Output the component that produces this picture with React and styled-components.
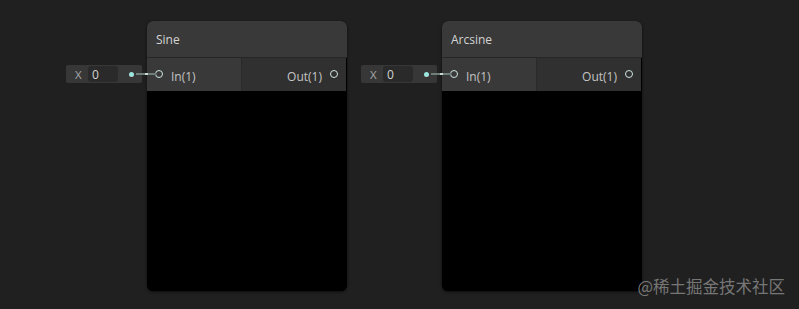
import styled, { createGlobalStyle } from "styled-components"

const GlobalStyle = createGlobalStyle`
  html, body {
    margin: 0;
    padding: 0;
    background: #202020;
  }
  body {
    font-family: "Open Sans", "DejaVu Sans", sans-serif;
  }
`

const Canvas = styled.div`
  position: relative;
  display: flex;
  align-items: flex-start;
  gap: 14px;
  width: 799px;
  height: 309px;
  padding: 21px 0 0 66px;
  box-sizing: border-box;
  background: #202020;
  overflow: hidden;
`

const Group = styled.div`
  display: flex;
  align-items: flex-start;
  gap: 5px;
`

const InlineField = styled.div`
  position: relative;
  display: flex;
  align-items: center;
  width: 76px;
  height: 18px;
  margin-top: 44px;
  padding-left: 9px;
  box-sizing: border-box;
  background: #373737;
  border-radius: 2px;
`

const FieldLabel = styled.span`
  width: 13px;
  font-size: 11.5px;
  color: #a8a8a8;
`

const FieldBox = styled.span`
  display: flex;
  align-items: center;
  width: 30px;
  height: 16px;
  padding-left: 4px;
  box-sizing: border-box;
  background: #2a2a2a;
  border-radius: 3px;
  font-size: 12px;
  color: #d2d2d2;
`

const Dot = styled.span`
  margin-left: 11px;
  width: 5px;
  height: 5px;
  border-radius: 50%;
  background: #9be6dc;
  box-shadow: 0 1px 0 #4a2a30;
`

const Wire = styled.span`
  position: absolute;
  left: 70px;
  top: 8px;
  width: 20px;
  height: 2px;
  background: linear-gradient(to right, #6f7d7b 0 9px, #c9d6d4 9px 12px, #6f7d7b 12px);
  z-index: 2;
`

const Node = styled.div`
  display: flex;
  flex-direction: column;
  width: 200px;
  height: 270px;
  border-radius: 6px;
  overflow: hidden;
  background: #000;
  box-shadow: 0 1px 3px rgba(0, 0, 0, 0.6);
`

const Header = styled.div`
  display: flex;
  align-items: center;
  height: 36px;
  padding-left: 9px;
  background: #393939;
  border-bottom: 1px solid #262626;
  font-size: 12px;
  color: #d4d4d4;
`

const PortRow = styled.div`
  display: flex;
  height: 33px;
`

const PortColumn = styled.div`
  display: flex;
  align-items: center;
  justify-content: ${p => (p.output ? "flex-end" : "flex-start")};
  gap: 8px;
  width: ${p => (p.output ? "104px" : "95px")};
  padding: ${p => (p.output ? "3px 8px 0 0" : "3px 0 0 8px")};
  box-sizing: border-box;
  background: ${p => (p.output ? "#303030" : "#393939")};
  border-right: ${p => (p.output ? "none" : "1px solid #2a2a2a")};
  font-size: 12px;
  color: #c4c4c4;
`

const PortCircle = styled.span`
  width: 8px;
  height: 8px;
  border-radius: 50%;
  border: 1.5px solid #cfe6e2;
  box-sizing: border-box;
  margin-top: -5px;
`

const Body = styled.div`
  flex: 1;
  background: #000;
`

const Watermark = styled.div`
  position: absolute;
  right: 14px;
  bottom: 11px;
  font-family: "Noto Sans CJK SC", sans-serif;
  font-size: 16.5px;
  color: #767676;
`

function GraphNode({ title }) {
  return (
    <Group>
      <InlineField>
        <FieldLabel>X</FieldLabel>
        <FieldBox>0</FieldBox>
        <Dot />
        <Wire />
      </InlineField>
      <Node>
        <Header>{title}</Header>
        <PortRow>
          <PortColumn>
            <PortCircle />
            In(1)
          </PortColumn>
          <PortColumn output>
            Out(1)
            <PortCircle />
          </PortColumn>
        </PortRow>
        <Body />
      </Node>
    </Group>
  )
}

export default function App() {
  return (
    <>
      <GlobalStyle />
      <Canvas>
        <GraphNode title="Sine" />
        <GraphNode title="Arcsine" />
        <Watermark>@稀土掘金技术社区</Watermark>
      </Canvas>
    </>
  )
}
